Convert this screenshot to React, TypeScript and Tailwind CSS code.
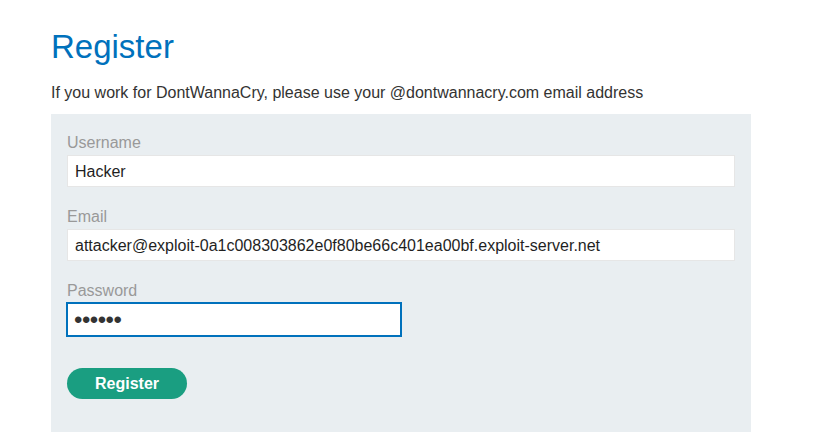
export default function App() {
  return (
    <div className="min-h-screen bg-white font-['Liberation_Sans',Arial,sans-serif] text-[#333332]">
      <div className="pl-[51px] pt-[27px] w-[751px]">
        {/* Heading */}
        <h1 className="text-[33px] leading-[40px] text-[#0071bc]">Register</h1>
        <p className="mt-[14px] text-[16px] leading-[24px]">
          If you work for DontWannaCry, please use your @dontwannacry.com email address
        </p>

        {/* Form panel */}
        <form className="mt-[9px] bg-[#e9eef1] px-4 pt-4 pb-[33px]">
          <label className="block text-[16px] leading-[24px] pt-px text-[#999]">Username</label>
          <input
            type="text"
            defaultValue="Hacker"
            className="block w-full h-[32px] bg-white border border-[#e6e6e6] px-[7px] pt-px text-[16px] text-[#1f1f1f] outline-none"
          />

          <label className="block mt-[17px] text-[16px] leading-[24px] pt-px text-[#999]">Email</label>
          <input
            type="email"
            defaultValue="attacker@exploit-0a1c008303862e0f80be66c401ea00bf.exploit-server.net"
            className="block w-full h-[32px] bg-white border border-[#e6e6e6] px-[7px] pt-px text-[16px] text-[#1f1f1f] outline-none"
          />

          <label className="block mt-[17px] text-[16px] leading-[24px] pt-px text-[#999]">Password</label>
          <input
            type="password"
            defaultValue="peter1"
            className="block w-1/2 h-[33px] bg-white border border-[#0071bc] outline outline-1 outline-[#0071bc] px-[6px] text-[24px] tracking-[-0.5px] text-[#333]"
          />

          <button
            type="button"
            className="mt-[32px] block w-[120px] h-[31px] rounded-full bg-[#1a9e81] text-white font-bold text-[16px]"
          >
            Register
          </button>
        </form>
      </div>
    </div>
  );
}
